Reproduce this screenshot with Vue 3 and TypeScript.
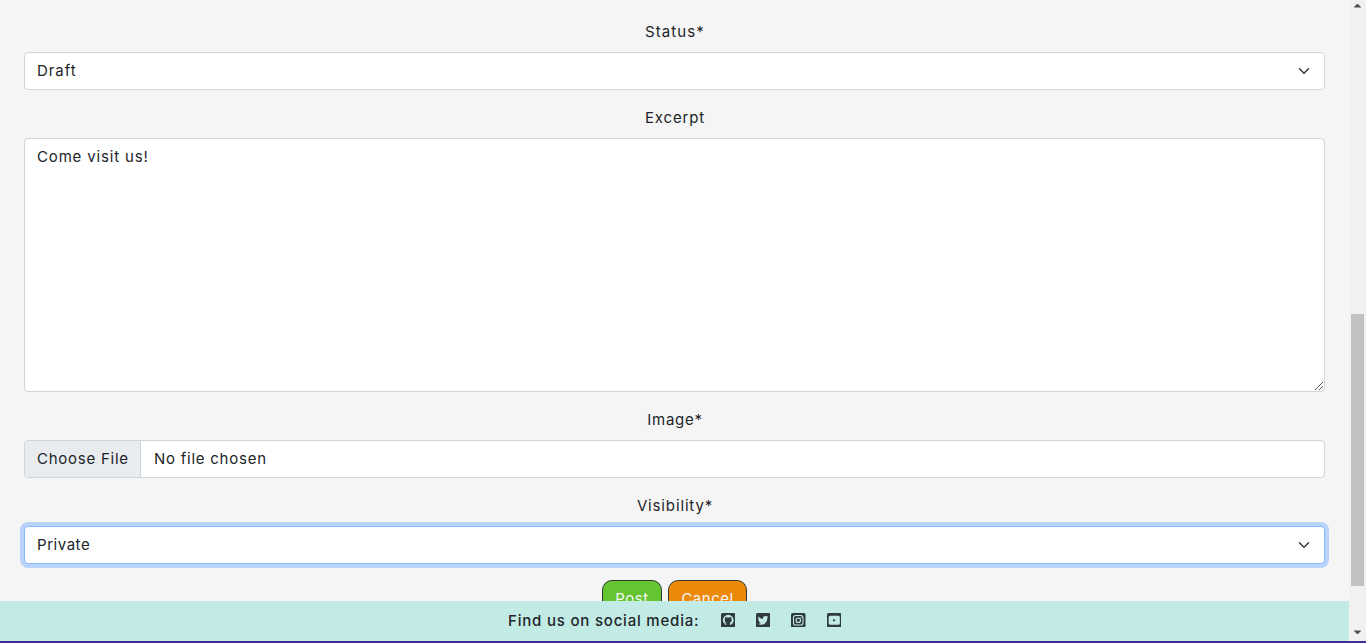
<script setup lang="ts">
const chevron = 'm2 5 6 6 6-6'
const socials = ['github', 'twitter', 'instagram', 'youtube']
</script>

<template>
  <div class="screen">
    <div class="viewport">
      <main class="page">
        <div class="group">
          <label class="label"><span class="t-status">Status*</span></label>
          <div class="control select">
            <span class="t-draft">Draft</span>
            <svg class="chevron" viewBox="0 0 16 16"><path :d="chevron" /></svg>
          </div>
        </div>
        <div class="group">
          <label class="label"><span class="t-excerpt">Excerpt</span></label>
          <div class="control area">
            <span class="t-come">Come visit us!</span>
            <svg class="grip" viewBox="0 0 9 9" shape-rendering="crispEdges"><path d="M0.5 8.5 8.5 0.5M4.5 8.5 8.5 4.5" /></svg>
          </div>
        </div>
        <div class="group">
          <label class="label"><span class="t-image">Image*</span></label>
          <div class="control file">
            <span class="choose"><span class="t-choose">Choose File</span></span>
            <span class="chosen t-chosen">No file chosen</span>
          </div>
        </div>
        <div class="group">
          <label class="label"><span class="t-visibility">Visibility*</span></label>
          <div class="control select focused">
            <span>Private</span>
            <svg class="chevron" viewBox="0 0 16 16"><path :d="chevron" /></svg>
          </div>
        </div>
        <div class="actions">
          <button class="btn post">Post</button>
          <button class="btn cancel">Cancel</button>
        </div>
      </main>
      <footer class="footer">
        <span class="find">Find us on social media:</span>
        <span class="socials">
          <svg v-for="name in socials" :key="name" class="social" viewBox="0 0 14 14">
            <rect width="14" height="14" rx="1.5" fill="#303b3d" />
            <g v-if="name === 'github'">
              <circle cx="7" cy="7" r="5.2" fill="#c2ebe5" />
              <path fill="#303b3d" d="M4.200 3.600 5.700 4.300h2.600l1.500-.7.200 1.600c.9 1.700.2 3.500-1.500 4 .300.400.400.800.400 1.300v2H5.100v-3.300C3.700 8.700 3.100 6.900 4 5.200z" />
              <path fill="none" stroke="#303b3d" stroke-width=".7" d="M3 9.300c.9.100.9 1.300 2.300 1.200" />
            </g>
            <path v-else-if="name === 'twitter'" fill="#c2ebe5" d="M12 3.900l-1.100.9c.1 3.800-2.600 6.500-6 6.500-1.100 0-2.200-.3-3-.9 1.100.1 2-.2 2.800-.8-.9 0-1.600-.6-1.900-1.400h.9C2.700 8 2.100 7.200 2.100 6.100l.9.200C2 5.500 1.900 4.300 2.400 3.300 3.500 4.700 5 5.500 6.900 5.600 6.500 4 7.600 2.800 8.900 2.800c.6 0 1.100.2 1.500.6l1.300-.5-.8 1.200z" />
            <g v-else-if="name === 'instagram'" fill="none" stroke="#c2ebe5">
              <rect x="2.400" y="2.400" width="9.200" height="9.200" rx="2.300" />
              <circle cx="7" cy="7" r="2.200" stroke-width="1.100" />
              <circle cx="9.700" cy="4.300" r=".55" fill="#c2ebe5" stroke="none" />
            </g>
            <g v-else>
              <rect x="1.600" y="2.600" width="10.800" height="8.800" rx="1.500" fill="#c2ebe5" />
              <path d="M6 5.500v3L8.500 7z" fill="#303b3d" />
            </g>
          </svg>
        </span>
      </footer>
    </div>
    <div class="scrollbar">
      <svg class="arrow" viewBox="0 0 9 5"><path d="M1 4.500V4l3-3h1l3 3v.5z" /></svg>
      <div class="track"><div class="thumb"></div></div>
      <svg class="arrow" viewBox="0 0 9 5"><path d="M1 .5V1l3 3h1l3-3V.5z" /></svg>
    </div>
    <div class="stripe"></div>
  </div>
</template>

<style>
html, body { margin: 0; overflow: hidden; }
</style>

<style scoped>
.screen {
  display: grid;
  grid-template-columns: 1349px 17px;
  grid-template-rows: 641px 2px;
  width: 1366px;
  height: 643px;
  background: #f5f5f5;
  color: #212529;
  font: 380 15px/24px Inter, "Liberation Sans", sans-serif;
  letter-spacing: 0.55px;
}
.viewport { display: flex; flex-direction: column; min-height: 0; overflow: hidden; }
.page { height: 581px; padding: 20px 24px 0; overflow: hidden; flex: none; }
.group { margin-bottom: 16px; }
.label { display: flex; justify-content: center; height: 24px; margin-bottom: 8px; padding-left: 1px; }
.t-status { letter-spacing: 1.1px; }
.t-draft { letter-spacing: 0.95px; }
.t-excerpt { letter-spacing: 0.85px; }
.t-come { letter-spacing: 0.84px; }
.t-image { letter-spacing: 0.75px; }
.t-choose { letter-spacing: 0.75px; }
.t-chosen { letter-spacing: 0.75px; }
.t-visibility { letter-spacing: 0.86px; }
.control {
  box-sizing: border-box;
  display: flex;
  height: 38px;
  padding: 6px 12px;
  background: #fff;
  border: 1px solid #ced4da;
  border-radius: 4px;
}
.select { align-items: center; justify-content: space-between; }
.chevron { width: 12px; height: 12px; margin-right: 2px; fill: none; stroke: #343a40; stroke-width: 2; stroke-linecap: round; stroke-linejoin: round; }
.area { height: 254px; justify-content: space-between; padding-right: 0; padding-bottom: 0; }
.grip { width: 9px; height: 9px; align-self: flex-end; margin: 0 1px 0 0; stroke: #555; fill: none; }
.file { padding: 0; overflow: hidden; }
.choose { box-sizing: border-box; width: 116px; padding: 6px 0 6px 12px; background: #e9ecef; border-right: 1px solid #ced4da; white-space: nowrap; }
.chosen { padding: 6px 13px; }
.focused { border-color: #86b7fe; box-shadow: 0 0 0 4px #bad3fa; }
.actions { display: flex; justify-content: center; gap: 6px; }
.btn {
  box-sizing: border-box;
  height: 38px;
  padding: 6px 0;
  border: 1px solid #303638;
  border-radius: 10px;
  color: #f5f5f5;
  font: inherit;
  letter-spacing: 0.5px;
}
.post { width: 60px; background: #65c530; }
.cancel { width: 79px; background: #ec890b; }
.footer { display: flex; height: 40px; background: #c2ebe5; align-items: center; padding-left: 508px; }
.find { width: 212.500px; font-weight: 500; letter-spacing: 0.8px; white-space: nowrap; }
.socials { display: flex; gap: 21.400px; margin-top: -2px; }
.social { width: 14.500px; height: 14.500px; margin-right: -0.500px; }
.scrollbar { display: flex; flex-direction: column; align-items: center; background: #f1f1f1; padding-top: 3px; }
.arrow { width: 9px; height: 5px; fill: #505050; flex: none; }
.track { height: 622px; padding-top: 306px; box-sizing: border-box; }
.thumb { width: 13px; height: 272px; background: #c1c1c1; }
.stripe { grid-column: 1 / -1; background: #432d94; }
</style>
